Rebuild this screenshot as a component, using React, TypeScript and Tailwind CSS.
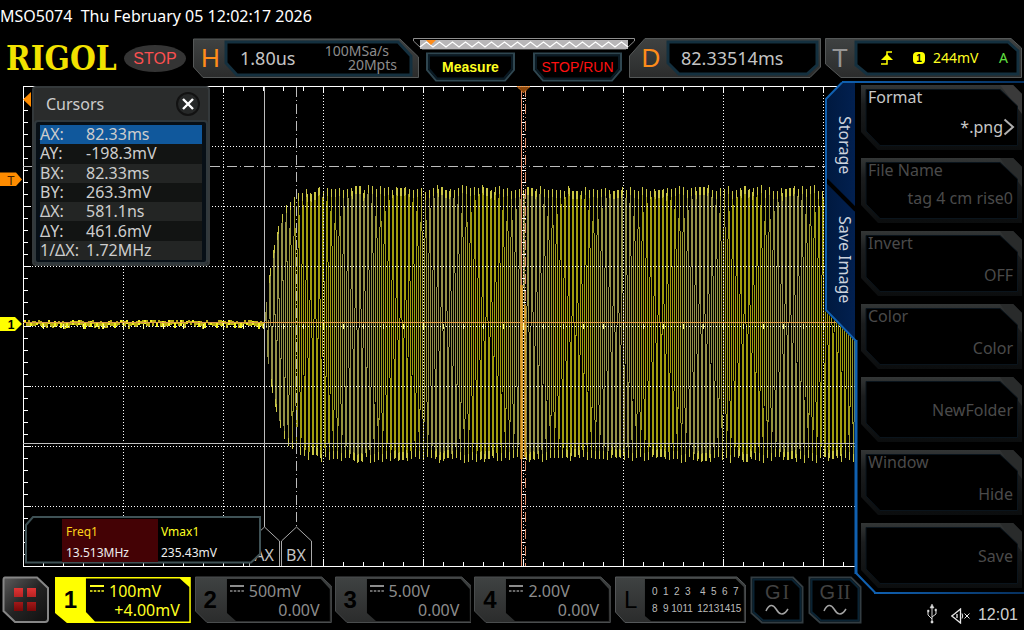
import React from "react";

const SANS = "font-['Noto_Sans',sans-serif]";
const ARIAL = "font-['Liberation_Sans',sans-serif]";

/* ---------- waveform data ---------- */

type Bar = { x: number; top: number; bottom: number; color: string };

const MID = 324;
const PERIOD = 4.095;
const CREST = 315;
const START = 265;

function jitter(n: number): number {
  const v = Math.sin(n * 12.9898) * 43758.5453;
  return v - Math.floor(v);
}

function mix(a: number[], b: number[], t: number): string {
  const c = a.map((v, i) => Math.round(v + (b[i] - v) * t));
  return `rgb(${c[0]},${c[1]},${c[2]})`;
}

function burst(): Bar[] {
  const bars: Bar[] = [];
  for (let x = START; x < 855; x++) {
    const cycle = Math.round((x - CREST) / PERIOD);
    const env = 1 - Math.exp(-(x - START + 1) / 11);
    const amp = env * (133 + jitter(cycle) * 6);
    let lo = 1;
    let hi = -1;
    for (let s = 0; s <= 8; s++) {
      const v = Math.cos((2 * Math.PI * (x + s / 8 - CREST)) / PERIOD);
      lo = Math.min(lo, v);
      hi = Math.max(hi, v);
    }
    const beat = Math.cos((2 * Math.PI * (x - CREST)) / 86);
    const warm = Math.max(0, Math.min(1, 0.55 + beat * 0.9));
    const color = mix([146, 144, 72], [160, 156, 14], warm);
    bars.push({
      x,
      top: Math.round(MID - hi * amp),
      bottom: Math.round(MID - lo * amp),
      color,
    });
  }
  return bars;
}

const BARS = burst();
const NOISE = Array.from({ length: 120 }, (_, i) => {
  const a = Math.floor(jitter(i) * 4);
  const b = Math.floor(jitter(i + 300) * 4);
  return { x: 24 + i * 2, y: 320 + a, h: 3 + b };
});

const COLS = [123, 223, 323, 423, 523, 623, 723, 823];
const ROWS = [146, 206, 266, 326, 386, 446, 506];
const XT = Array.from({ length: 42 }, (_, i) => 23 + i * 20);
const YT = Array.from({ length: 40 }, (_, i) => 86 + i * 12);

function Plot() {
  return (
    <svg viewBox="0 80 1024 492" className="block h-auto w-full" shapeRendering="crispEdges" role="img" aria-label="Waveform">
      {/* noise floor */}
      {NOISE.map((n, i) => (
        <rect key={i} x={n.x} y={n.y} width={2} height={n.h} fill={i % 3 ? "#b9b014" : "#f0f020"} />
      ))}
      {BARS.map((b) => (
        <rect key={b.x} x={b.x} y={b.top} width={1} height={Math.max(1, b.bottom - b.top)} fill={b.color} />
      ))}
      {/* bright tips of the crests */}
      {BARS.filter((b) => b.x > 268).map((b) => {
        const a = 133 * (1 - Math.exp(-(b.x - START + 1) / 11));
        const up = MID - b.top > a * 0.98;
        const down = b.bottom - MID > a * 0.98;
        return (
          <g key={b.x} fill="#cac644">
            {up && <rect x={b.x} y={b.top} width={1} height={8} />}
            {down && <rect x={b.x} y={b.bottom - 8} width={1} height={8} />}
          </g>
        );
      })}

      {/* graticule */}
      <g stroke="#fff" strokeWidth={1} fill="none">
        <path d="M23.5 566.5V86.5H860M23.5 566.5H860" />
        {COLS.map((x) => (
          <path key={x} d={`M${x + 0.5} 89V566`} strokeDasharray="1 2" />
        ))}
        {ROWS.map((y) => (
          <path key={y} d={`M26 ${y + 0.5}H860`} strokeDasharray="1 2" />
        ))}
        {XT.map((x) => (
          <path key={x} d={`M${x + 0.5} 87V${(x - 23) % 100 ? 91 : 93}M${x + 0.5} 566V${(x - 23) % 100 ? 562 : 559}`} />
        ))}
        {XT.map((x) => (
          <path key={x} d={`M${x + 0.5} 324V329`} stroke="#ffff9a" />
        ))}
        {YT.map((y) => (
          <path key={y} d={`M24 ${y + 0.5}H${(y - 86) % 60 ? 28 : 31}M522 ${y + 0.5}H526`} />
        ))}
      </g>

      {/* cursors */}
      <g stroke="#bdbdbd" fill="none">
        <path d="M264.5 87V527M23 443.5H856" />
        <path d="M296.5 87V527M23 166.5H856" strokeDasharray="10 3 1 3" />
      </g>
      <path d="M521.5 87V566" stroke="#e8906c" />
      <path d="M525.5 87V566" stroke="#e0906c" strokeDasharray="10 3 1 3" />
      <path d="M520 285h3v174h-3zM524 305h2v152h-2z" fill="#e0a020" opacity="0.75" />
      <path d="M23 322.5H856" stroke="#e09a4a" />
      <path d="M523.5 89V566" stroke="#fff" strokeDasharray="1 2" />

      <g shapeRendering="geometricPrecision">
        <path d="M517 86.500H530L523.500 93z" fill="#8a4408" stroke="#ff9430" strokeDasharray="1 1" />
        {/* cursor name flags */}
        <g stroke="#aaa" fill="#000">
          <path d="M249.500 566V541L264.500 527L279.500 541V566" />
          <path d="M281.500 566V541L296.500 527L311.500 541V566" />
        </g>
        <g fill="#c4c4c4" fontSize={16} textAnchor="middle" className={SANS}>
          <text x={264} y={561}>AX</text>
          <text x={296} y={561}>BX</text>
        </g>
        {/* level markers */}
        <path d="M23 99.500L31 92V107z" fill="#ff8c00" />
        <path d="M0 172.500H16L22 179.500L16 186H0z" fill="#ff8c00" />
        <path d="M0 317H15L22 324L15 331H0z" fill="#ffff00" />
        <g className={ARIAL} fill="#000" fontSize={12} textAnchor="middle">
          <text x={11} y={185} fill="#402000">T</text>
          <text x={11} y={329} fontWeight="bold">1</text>
        </g>
      </g>
    </svg>
  );
}

/* ---------- frames ---------- */

function Backdrop({ box, children }: { box: string; children: React.ReactNode }) {
  return (
    <svg viewBox={box} preserveAspectRatio="none" className="absolute inset-0 h-full w-full" aria-hidden="true">
      <defs>
        <linearGradient id="metal" x1="0" y1="0" x2="0" y2="1">
          <stop offset="0" stopColor="#3f4242" />
          <stop offset="1" stopColor="#2b2c2c" />
        </linearGradient>
        <linearGradient id="dark" x1="0" y1="0" x2="0" y2="1">
          <stop offset="0" stopColor="#333636" />
          <stop offset="0.3" stopColor="#1b1d1e" />
          <stop offset="1" stopColor="#0b0d0e" />
        </linearGradient>
      </defs>
      {children}
    </svg>
  );
}

function TopBar() {
  return (
    <div className="flex h-11 items-start pt-0.5">
      <div className="w-[116px] shrink-0 pl-1.5 font-['DejaVu_Serif_Condensed','DejaVu_Serif',serif] text-[33px] leading-[42px] font-bold text-[#f2e200]">
        RIGOL
      </div>
      <div className={`mt-[7px] ml-2 flex h-[27px] w-[62px] shrink-0 items-center justify-center rounded-[50%] bg-[#343434] text-base text-[#fb5050] ${ARIAL}`}>
        STOP
      </div>

      <button aria-label="Horizontal" className="relative ml-[7px] flex h-10 flex-[226_1_0] items-center">
        <Backdrop box="0 0 226 40">
          <path d="M0.500 1H207L225.500 19V39.500H10L0.500 29z" fill="url(#metal)" stroke="#555858" />
          <path d="M33 4H205L218 18V37H44L33 25z" fill="#000" stroke="#14303f" strokeWidth="3" />
        </Backdrop>
        <span className={`relative w-[35px] text-center text-[26px] text-[#ff8c1a] ${ARIAL}`}>H</span>
        <span className="relative ml-3 flex-1 text-left text-lg text-[#c4c4c4]">1.80us</span>
        <span className="relative w-[98px] pr-[30px] text-right text-sm leading-[14px] text-[#8c8c8c]">
          <span className="block">100MSa/s</span>
          <span className="-mr-2 block">20Mpts</span>
        </span>
      </button>

      <div className="-mx-1.5 flex flex-[222_1_0] flex-col">
        <svg viewBox="0 0 222 12" preserveAspectRatio="none" className="block h-3 w-full" aria-hidden="true">
          <path d="M0.500 0.500H221.500V3L213 11H9L0.500 3z" fill="#000" stroke="#8e8e8e" />
          <rect x="7" y="2" width="208" height="9" fill="#b8b6b8" />
          <polyline
            points={Array.from({ length: 33 }, (_, i) => `${7 + i * 6.5},${i % 2 ? 4 : 9}`).join(" ")}
            fill="none"
            stroke="#fff"
            strokeWidth="1.2"
          />
          <path d="M13 2H23L18 7z" fill="#ff8c1a" />
        </svg>
        <div className="mt-0.5 flex justify-between px-3">
          {[
            ["Measure", "font-bold text-[#ffff20]"],
            ["STOP/RUN", "text-[#ff1010]"],
          ].map(([t, c]) => (
            <button key={t} className={`relative flex h-[30px] w-[91px] items-center justify-center text-sm ${ARIAL} ${c}`}>
              <Backdrop box="0 0 91 30">
                <path d="M2 1.500H89V18L80 28.500H11L2 18z" fill="#000" stroke="#2f4650" strokeWidth="2" />
                <path d="M4 3.500H87V17L79 26.500H12L4 17z" fill="#000" stroke="#0a1a24" strokeWidth="2" />
              </Backdrop>
              <span className="relative">{t}</span>
            </button>
          ))}
        </div>
      </div>

      <button aria-label="Delay" className="relative flex h-10 flex-[192_1_0] items-center">
        <Backdrop box="0 0 192 40">
          <path d="M16 0.500H191.500V29L181 39.500H0.500V18z" fill="url(#metal)" stroke="#555858" />
          <path d="M39 4H188V27L178 36H50L39 25z" fill="#000" stroke="#14303f" strokeWidth="3" />
        </Backdrop>
        <span className={`relative w-11 text-center text-[26px] text-[#ff8c1a] ${ARIAL}`}>D</span>
        <span className="relative ml-2 text-lg text-[#c4c4c4]">82.33514ms</span>
      </button>

      <button aria-label="Trigger" className="relative mr-0.5 ml-1 flex h-10 flex-[197_1_0] items-center">
        <Backdrop box="0 0 197 40">
          <path d="M0.500 0.500H186L196.500 10V39.500H16L0.500 26z" fill="url(#metal)" stroke="#555858" />
          <path d="M31 4H183L193 13V36H42L31 27z" fill="#000" stroke="#14303f" strokeWidth="3" />
        </Backdrop>
        <span className={`relative w-[30px] text-center text-[26px] text-[#969696] ${ARIAL}`}>T</span>
        <svg viewBox="0 0 12 14" className="relative ml-[26px] h-[14px] w-3" aria-hidden="true">
          <path d="M0 13H6V1H11" fill="none" stroke="#ffff00" strokeWidth="1.500" />
          <path d="M0 9L6 3L12 9z" fill="#ffff00" />
        </svg>
        <span className={`relative ml-5 flex h-3 w-3 items-center justify-center rounded-sm bg-[#ffff00] text-[10px] font-bold text-black ${ARIAL}`}>1</span>
        <span className="relative ml-2 flex-1 text-left text-sm text-[#ffff20]">244mV</span>
        <span className="relative pr-3.5 text-sm text-[#60e040]">A</span>
      </button>
    </div>
  );
}

/* ---------- overlays ---------- */

const CURSORS = [
  ["AX:", "82.33ms"],
  ["AY:", "-198.3mV"],
  ["BX:", "82.33ms"],
  ["BY:", "263.3mV"],
  ["ΔX:", "581.1ns"],
  ["ΔY:", "461.6mV"],
  ["1/ΔX:", "1.72MHz"],
];

function CursorWindow() {
  return (
    <section className="absolute top-1.5 left-8 w-[178px] rounded border-2 border-[#34393b] bg-[#2a2c2c] text-[#cdcdcd]">
      <header className="flex h-8 items-center justify-between pr-2 pl-3">
        <h2 className="text-base">Cursors</h2>
        <button aria-label="Close" className="flex h-6 w-6 items-center justify-center rounded-full border-2 border-[#121212] bg-[#262828]">
          <svg viewBox="0 0 12 12" className="h-3 w-3" aria-hidden="true">
            <path d="M1 1L11 11M11 1L1 11" stroke="#fff" strokeWidth="2.400" />
          </svg>
        </button>
      </header>
      <div className="rounded-sm border-2 border-[#30383c] bg-[#070f16] px-1 pt-[3px] pb-0.5">
        <table className="h-[135px] w-full border-collapse text-base leading-[19px]">
          <tbody>
            {CURSORS.map(([k, v], i) => (
              <tr key={k} className={i === 0 ? "bg-[#10589c]" : i % 2 ? "bg-[#121413]" : "bg-[#232524]"}>
                <th scope="row" className="w-[46px] p-0 text-left font-normal whitespace-nowrap">{k}</th>
                <td className="p-0">{v}</td>
              </tr>
            ))}
          </tbody>
        </table>
      </div>
    </section>
  );
}

function Measurements() {
  return (
    <section className="absolute bottom-2 left-[25px] h-[48px] w-[236px]">
      <Backdrop box="0 0 236 48">
        <path d="M8 1H235V38L226 46.500H1V9z" fill="#000" stroke="#3f5256" strokeWidth="2" />
        <rect x="37" y="3" width="96" height="43" fill="#440205" />
      </Backdrop>
      <dl className="relative grid h-full grid-cols-[95px_1fr] items-center pt-1 pl-[41px] text-xs">
        <div>
          <dt className="mb-[5px] text-[#ffd21a]">Freq1</dt>
          <dd className="text-[#eee]">13.513MHz</dd>
        </div>
        <div>
          <dt className="mb-[5px] text-[#ffff20]">Vmax1</dt>
          <dd className="text-[#eee]">235.43mV</dd>
        </div>
      </dl>
    </section>
  );
}

type Item = { label?: string; value: string; place: string; on?: boolean };

const ITEMS: Item[] = [
  { label: "Format", value: "*.png", place: "pt-[30px]", on: true },
  { label: "File Name", value: "tag 4 cm rise0", place: "pt-7" },
  { label: "Invert", value: "OFF", place: "pt-8" },
  { label: "Color", value: "Color", place: "pt-8" },
  { value: "NewFolder", place: "pt-[21px]" },
  { label: "Window", value: "Hide", place: "pt-8" },
  { value: "Save", place: "pt-[21px]" },
];

function StoragePanel() {
  return (
    <aside className="absolute top-[81px] right-0 flex h-[513px] w-[199px]">
      <svg viewBox="0 0 199 513" className="absolute inset-0 h-full w-full" aria-hidden="true">
        <defs>
          <linearGradient id="tab" x1="0" y1="0" x2="1" y2="0">
            <stop offset="0" stopColor="#00193f" />
            <stop offset="1" stopColor="#022050" />
          </linearGradient>
          <linearGradient id="edge" x1="0" y1="0" x2="1" y2="0">
            <stop offset="0" stopColor="#1060b0" />
            <stop offset="1" stopColor="#06305e" />
          </linearGradient>
        </defs>
        <path d="M199 1H17L0 18V230L30 260V492L49 512H199z" fill="#000" />
        <path d="M17 2L1 18V229L30 258V2z" fill="url(#tab)" />
        <path d="M1 99L31 129" stroke="#000" strokeWidth="4" />
        <path d="M17 1.500L1 18V229L31 260V492L50 511.500" fill="none" stroke="#1060b0" strokeWidth="2" />
        <path d="M31 259V493" stroke="#1060b0" strokeWidth="3" />
        <rect x="17" y="0" width="182" height="2" fill="url(#edge)" />
        <rect x="49" y="511" width="150" height="2" fill="url(#edge)" />
      </svg>
      <nav className="relative flex w-9 flex-col text-base text-[#ccd2dc]">
        <button className="h-32 w-9 pl-1 [writing-mode:vertical-rl]">Storage</button>
        <button className="h-[102px] w-9 pl-1 [writing-mode:vertical-rl]">Save Image</button>
      </nav>
      <div className="relative flex flex-1 flex-col gap-2 pt-1 pr-0.5">
        {ITEMS.map((it) => (
          <button
            key={it.value}
            className={`relative flex h-[65px] w-full items-start px-[7px] text-left text-base leading-6 ${it.on ? "text-[#c8c8c8]" : "text-[#4a4a4a]"}`}
          >
            <Backdrop box="0 0 161 65">
              <path d="M0 0H152L161 9V65H17L0 47z" fill="url(#dark)" />
              <path d="M139 0H152L161 9V29z" fill={it.on ? "#3a3a3a" : "#292b2b"} />
              <path d="M5 4.500H139L156.500 21V60.500H19L5 46z" fill="#000" stroke="#0a141c" />
            </Backdrop>
            {it.label && <span className="absolute top-0 left-[7px]">{it.label}</span>}
            <span className={`relative flex flex-1 items-center justify-end ${it.place} ${it.on ? "" : "pr-0.5"}`}>
              {it.value}
              {it.on && (
                <svg viewBox="0 0 12 18" className="h-[18px] w-3" aria-hidden="true">
                  <path d="M1.500 1.500L10 9L1.500 16.500" fill="none" stroke="#b0b0b0" strokeWidth="2" />
                </svg>
              )}
            </span>
          </button>
        ))}
      </div>
    </aside>
  );
}

/* ---------- bottom bar ---------- */

const CHANNELS = [
  { n: "1", scale: "100mV", offset: "+4.00mV", on: true },
  { n: "2", scale: "500mV", offset: "0.00V" },
  { n: "3", scale: "5.00V", offset: "0.00V" },
  { n: "4", scale: "2.00V", offset: "0.00V" },
];

function Channel({ n, scale, offset, on }: { n: string; scale: string; offset: string; on?: boolean }) {
  return (
    <button className={`relative flex h-12 flex-[137_1_0] ${on ? "text-[#ffff20]" : "text-[#8c8c8c]"}`}>
      <Backdrop box="0 0 137 48">
        {on ? (
          <>
            <path d="M0 1H136V47H12L0 37z" fill="#ffff00" />
            <path d="M31 2.500H125L134.500 11V45.500H40L31 36z" fill="#000" />
          </>
        ) : (
          <>
            <path d="M0.500 1H127L136.500 10V46.500H12L0.500 35z" fill="url(#metal)" stroke="#4a4d4e" />
            <path d="M32 3H126L135 13V45H41L32 37z" fill="#000" />
          </>
        )}
      </Backdrop>
      <span className={`relative flex w-[31px] items-center justify-center text-2xl font-bold text-black ${ARIAL}`}>{n}</span>
      <span className="relative flex flex-1 flex-col justify-center pt-0.5 pr-3 pl-1 text-base leading-[19px]">
        <span className="flex items-center gap-[5px]">
          <svg viewBox="0 0 14 7" className="mb-1.5 h-[7px] w-[14px]" aria-hidden="true">
            <path d="M0 1H14" stroke="currentColor" strokeWidth="2" />
            <path d="M0 6H14" stroke="currentColor" strokeWidth="1.500" strokeDasharray="2.500 1.300" />
          </svg>
          {scale}
        </span>
        <span className="text-right">{offset}</span>
      </span>
    </button>
  );
}

function BottomBar() {
  return (
    <footer className="flex items-start gap-[3px] px-0.5 pt-1">
      <button aria-label="Menu" className="relative mr-0.5 h-12 w-12 shrink-0">
        <svg viewBox="0 0 48 48" className="h-full w-full" aria-hidden="true">
          <defs>
            <linearGradient id="knob" x1="0" y1="0" x2="1" y2="1">
              <stop offset="0" stopColor="#5c5c5c" />
              <stop offset="0.5" stopColor="#232323" />
              <stop offset="1" stopColor="#101010" />
            </linearGradient>
            <linearGradient id="red" x1="0" y1="0" x2="0" y2="1">
              <stop offset="0" stopColor="#e03434" />
              <stop offset="1" stopColor="#780808" />
            </linearGradient>
          </defs>
          <path d="M3 1.500H35L46 12V43Q46 46 43 46H13L1.500 35V4Q1.500 1.500 3 1.500z" fill="url(#knob)" stroke="#868686" strokeWidth="2" />
          <path d="M12 12H21V21H12zM25 12H34V21H25zM12 26H21V35H12zM25 26H34V35H25z" fill="url(#red)" />
        </svg>
      </button>
      {CHANNELS.map((c) => (
        <Channel key={c.n} {...c} />
      ))}
      <button aria-label="Logic channels" className="relative ml-px flex h-12 flex-[131_1_0] items-center">
        <Backdrop box="0 0 131 48">
          <path d="M0.500 1H122L130.500 9V46.500H10L0.500 36z" fill="url(#metal)" stroke="#55585a" />
          <path d="M30 3H121L129 11V45H36L30 40z" fill="#000" />
        </Backdrop>
        <span className={`relative w-[31px] text-center text-2xl text-black ${ARIAL}`}>L</span>
        <span className={`relative flex gap-1 pl-[3px] text-[10px] leading-[17px] text-[#bcbcbc] ${ARIAL}`}>
          {[0, 4].map((base) => (
            <span key={base} className="grid grid-cols-[repeat(4,11px)] text-center">
              {[0, 1, 2, 3, 8, 9, 10, 11].map((d) => (
                <span key={d}>{base + d}</span>
              ))}
            </span>
          ))}
        </span>
      </button>
      {["I", "II"].map((g) => (
        <button key={g} className="relative ml-px flex h-12 w-[54px] shrink-0 flex-col items-center justify-start pt-1.5">
          <Backdrop box="0 0 54 48">
            <path d="M1.500 1.500H43L52.500 11V46.500H12L1.500 37z" fill="#000" stroke="#333d42" strokeWidth="2" />
            <path d="M3.500 3.500H42L50.500 12V44.500H13L3.500 36z" fill="none" stroke="#0a2333" strokeWidth="2" />
          </Backdrop>
          <span className={`relative text-xl leading-5 text-[#424242] ${ARIAL}`}>
            G<span className="pl-0.5 font-['Liberation_Serif',serif]">{g}</span>
          </span>
          <svg viewBox="0 0 24 14" className="relative mt-px h-[14px] w-6" aria-hidden="true">
            <path d="M1 8C4 1 8 1 11 6S18 14 23 6" fill="none" stroke="#a4a4a4" strokeWidth="1.500" />
          </svg>
        </button>
      ))}
      <div className={`flex h-12 w-[157px] shrink-0 items-end justify-end pr-1 text-base leading-[18px] text-[#d0d0d0] ${ARIAL}`}>
        <svg viewBox="0 0 10 20" className="mr-3.5 h-5 w-2.5" aria-hidden="true" fill="none" stroke="#d8d8d8">
          <path d="M5 3V18M1 8V11L5 15M9 7V10L5 13" />
          <path d="M3 4L5 0L7 4zM4 17H6V19H4zM0.500 6H2V8H0.500zM8 5H9.500V7H8z" fill="#d8d8d8" strokeWidth="0.500" />
        </svg>
        <svg viewBox="0 0 20 16" className="mr-[7px] h-4 w-5" aria-hidden="true" fill="none" stroke="#e8e8e8">
          <path d="M9.500 1V15L4 10.500L0.800 8L4 5.500zM6 6V10" strokeWidth="1.300" />
          <path d="M11 5.500Q12.500 8 11 10.500" />
          <path d="M13.500 5.500L18.500 10.500M18.500 5.500L13.500 10.500" />
        </svg>
        <span>12:01</span>
      </div>
    </footer>
  );
}

export default function App() {
  return (
    <main className={`relative min-h-screen overflow-hidden bg-black text-base ${SANS}`}>
      <h1 className="h-9 pt-1 text-base leading-6 whitespace-pre text-white">MSO5074  Thu February 05 12:02:17 2026</h1>
      <TopBar />
      <div className="relative">
        <Plot />
        <CursorWindow />
        <Measurements />
      </div>
      <BottomBar />
      <StoragePanel />
    </main>
  );
}
